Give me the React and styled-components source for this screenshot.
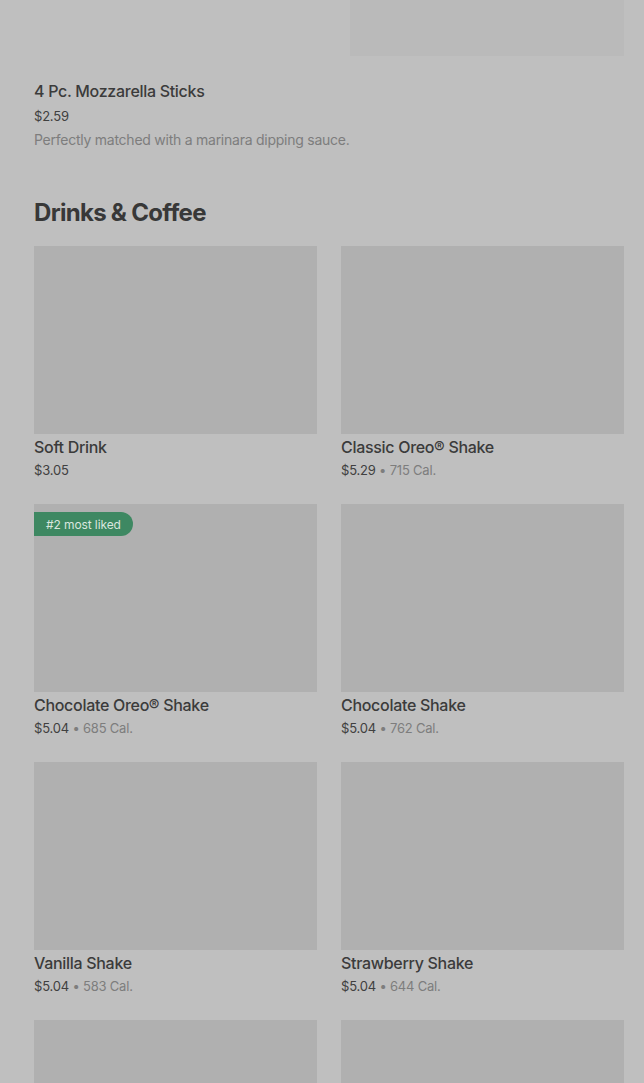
import React from "react";
import styled, { createGlobalStyle } from "styled-components";

const Global = createGlobalStyle`
  html, body { margin: 0; padding: 0; background: #bfbfbf; }
  body { font-family: Inter, "Noto Sans", Roboto, sans-serif; -webkit-font-smoothing: antialiased; }
  * { box-sizing: border-box; }
`;

const Page = styled.div`
  padding: 0 20px 0 34px;
  height: 1083px;
  overflow: hidden;
`;

const FeaturedItem = styled.div`
  display: flex;
  flex-direction: column;
`;

const FeaturedImage = styled.div`
  align-self: flex-end;
  width: 274px;
  height: 56px;
  background: #bababa;
  margin-bottom: 24px;
`;

const ItemTitle = styled.div`
  font-size: 16px;
  line-height: 22px;
  font-weight: 500;
  color: #3b3b3b;
  letter-spacing: -0.3px;
`;

const PriceLine = styled.div`
  font-size: 13px;
  line-height: 20px;
  color: #404040;
  margin-top: ${(p) => p.$gap}px;
  letter-spacing: -0.2px;
`;

const Cal = styled.span`
  color: #7d7d7d;
`;

const Description = styled.div`
  font-size: 14px;
  line-height: 20px;
  color: #7d7d7d;
  margin-top: 4px;
  letter-spacing: -0.25px;
`;

const SectionTitle = styled.h2`
  margin: 47px 0 17px;
  font-size: 24px;
  line-height: 32px;
  font-weight: 700;
  color: #383838;
  letter-spacing: -0.7px;
`;

const Grid = styled.div`
  display: grid;
  grid-template-columns: 283px 283px;
  column-gap: 24px;
  row-gap: 24px;
`;

const Card = styled.div`
  display: flex;
  flex-direction: column;
`;

const CardImage = styled.div`
  position: relative;
  height: 188px;
  background: #b0b0b0;
  margin-bottom: 2px;
`;

const Badge = styled.span`
  position: absolute;
  top: 8px;
  left: 0;
  height: 24px;
  padding: 0 12px 0 12px;
  display: flex;
  align-items: center;
  background: #3e8862;
  color: #d9e6df;
  font-size: 12px;
  border-radius: 0 12px 12px 0;
  letter-spacing: -0.1px;
`;

const items = [
  { name: "Soft Drink", price: "$3.05" },
  { name: "Classic Oreo® Shake", price: "$5.29", cal: "715 Cal." },
  { name: "Chocolate Oreo® Shake", price: "$5.04", cal: "685 Cal.", badge: "#2 most liked" },
  { name: "Chocolate Shake", price: "$5.04", cal: "762 Cal." },
  { name: "Vanilla Shake", price: "$5.04", cal: "583 Cal." },
  { name: "Strawberry Shake", price: "$5.04", cal: "644 Cal." },
  { name: "", price: "" },
  { name: "", price: "" },
];

export default function App() {
  return (
    <Page>
      <Global />
      <FeaturedItem>
        <FeaturedImage />
        <ItemTitle>4 Pc. Mozzarella Sticks</ItemTitle>
        <PriceLine $gap={4}>$2.59</PriceLine>
        <Description>Perfectly matched with a marinara dipping sauce.</Description>
      </FeaturedItem>
      <SectionTitle>Drinks &amp; Coffee</SectionTitle>
      <Grid>
        {items.map((it, i) => (
          <Card key={i}>
            <CardImage>{it.badge && <Badge>{it.badge}</Badge>}</CardImage>
            <ItemTitle>{it.name}</ItemTitle>
            <PriceLine $gap={2}>
              {it.price}
              {it.cal && <Cal> • {it.cal}</Cal>}
            </PriceLine>
          </Card>
        ))}
      </Grid>
    </Page>
  );
}
